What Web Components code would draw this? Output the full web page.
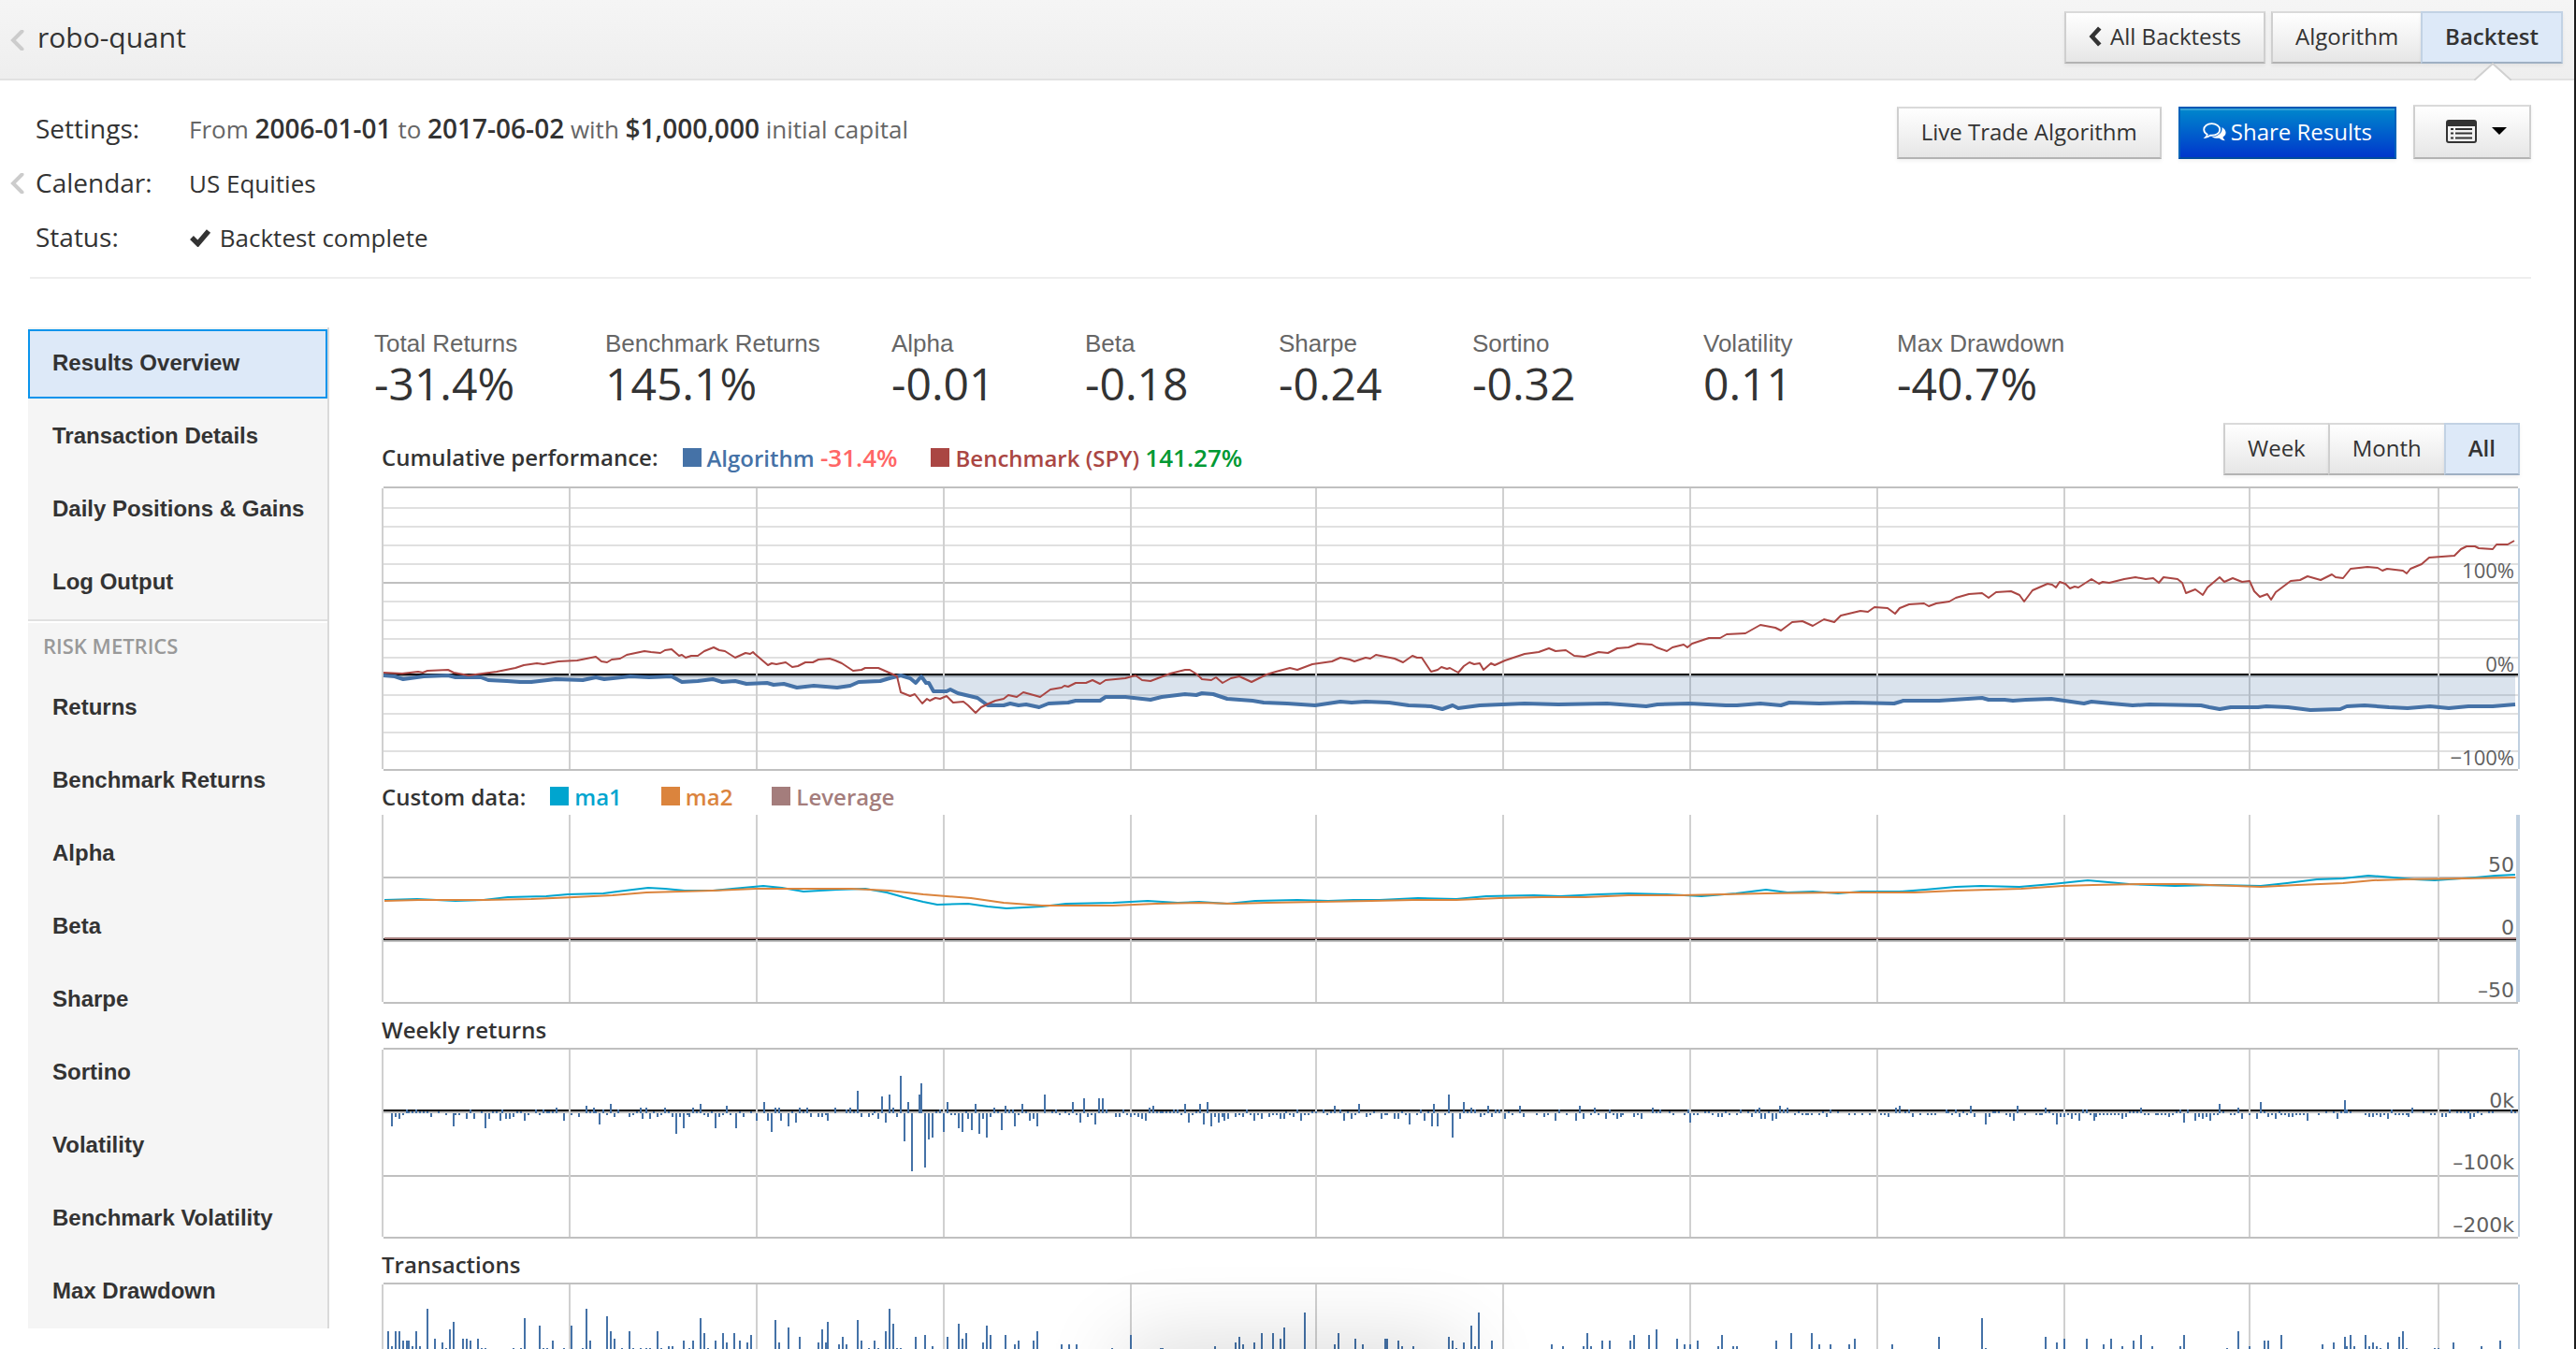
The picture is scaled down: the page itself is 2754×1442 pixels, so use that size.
<!doctype html>
<html lang="en">
<head>
    <meta charset="utf-8">
    <title>robo-quant</title>
    <style>
        body {
            margin: 0;
            height: 100vh;
            overflow: hidden;
            box-sizing: border-box;
            border-right: 2px solid #1c1c1c;
            background: #fff;
            color: #333;
            font-family: "Open Sans", sans-serif;
            font-size: 24px;
        }

        main {
            display: flex;
            align-items: flex-start;
            gap: 48px;
            padding: 52px 58px 0 30px;
        }

        .results {
            flex: 1;
            min-width: 0;
        }

        .metrics {
            display: grid;
            grid-template-columns: 247fr 306fr 207fr 207fr 207fr 247fr 207fr 666fr;
            padding-top: 4px;
        }

        .change {
            font-size: 26px;
        }

        .down {
            color: #f66;
        }

        .up {
            color: #093;
        }

        /* soft shade coming up from the bottom edge of the window */
        .shade {
            position: fixed;
            left: 44%;
            top: calc(100% + 6px);
            width: 340px;
            height: 60px;
            box-shadow: 0 0 90px 10px rgba(0, 0, 0, .16);
            pointer-events: none;
        }
    </style>
</head>
<body>
<page-header>
    robo-quant
    <q-button slot="actions"><q-icon name="chevron-left"></q-icon>All Backtests</q-button>
    <q-group slot="actions">
        <q-button>Algorithm</q-button>
        <q-button active notch>Backtest</q-button>
    </q-group>
</page-header>

<backtest-info>
    <info-row label="Settings:">From <b>2006-01-01</b> to <b>2017-06-02</b> with <b>$1,000,000</b> initial capital</info-row>
    <info-row label="Calendar:" handle strong>US Equities</info-row>
    <info-row label="Status:" strong><q-icon name="check"></q-icon> Backtest complete</info-row>
    <q-button slot="actions">Live Trade Algorithm</q-button>
    <q-button slot="actions" primary><q-icon name="comments"></q-icon>Share Results</q-button>
    <q-button slot="actions" menu label="Layout"><q-icon name="list"></q-icon><q-icon name="caret"></q-icon></q-button>
</backtest-info>

<main>
    <side-nav>
        <nav-item active>Results Overview</nav-item>
        <nav-item>Transaction Details</nav-item>
        <nav-item>Daily Positions &amp; Gains</nav-item>
        <nav-item>Log Output</nav-item>
        <nav-heading>RISK METRICS</nav-heading>
        <nav-item>Returns</nav-item>
        <nav-item>Benchmark Returns</nav-item>
        <nav-item>Alpha</nav-item>
        <nav-item>Beta</nav-item>
        <nav-item>Sharpe</nav-item>
        <nav-item>Sortino</nav-item>
        <nav-item>Volatility</nav-item>
        <nav-item>Benchmark Volatility</nav-item>
        <nav-item>Max Drawdown</nav-item>
    </side-nav>

    <div class="results">
        <div class="metrics">
            <metric-value label="Total Returns">-31.4%</metric-value>
            <metric-value label="Benchmark Returns">145.1%</metric-value>
            <metric-value label="Alpha">-0.01</metric-value>
            <metric-value label="Beta">-0.18</metric-value>
            <metric-value label="Sharpe">-0.24</metric-value>
            <metric-value label="Sortino">-0.32</metric-value>
            <metric-value label="Volatility">0.11</metric-value>
            <metric-value label="Max Drawdown">-40.7%</metric-value>
        </div>

        <perf-chart data="performance" heading="Cumulative performance:">
            <legend-item slot="legend" style="--series: #4572a7">Algorithm <span class="change down">-31.4%</span></legend-item>
            <legend-item slot="legend" style="--series: #aa4643">Benchmark (SPY) <span class="change up">141.27%</span></legend-item>
            <q-group slot="range">
                <q-button>Week</q-button>
                <q-button>Month</q-button>
                <q-button active>All</q-button>
            </q-group>
        </perf-chart>
        <perf-chart data="custom" heading="Custom data:">
            <legend-item slot="legend" style="--series: #00a5cf">ma1</legend-item>
            <legend-item slot="legend" style="--series: #db843d">ma2</legend-item>
            <legend-item slot="legend" style="--series: #a47d7c">Leverage</legend-item>
        </perf-chart>
        <perf-chart data="weekly" heading="Weekly returns"></perf-chart>
        <perf-chart data="transactions" heading="Transactions"></perf-chart>
    </div>
</main>
<div class="shade"></div>

<template id="page-header">
    <style>
        :host {
            display: flex;
            justify-content: space-between;
            align-items: flex-start;
            box-sizing: border-box;
            height: 86px;
            padding: 0 12px 0 11px;
            border-bottom: 2px solid #e2e2e2;
            background: linear-gradient(#f5f5f5, #eee);
        }

        h1 {
            display: flex;
            align-items: center;
            gap: 14px;
            margin: 0;
            font-size: 30px;
            font-weight: 400;
            line-height: 80px;
        }

        q-icon {
            color: #ccc;
            padding-top: 6px;
        }

        .actions {
            display: flex;
            gap: 6px;
            padding-top: 12px;
        }
    </style>
    <h1><q-icon name="handle"></q-icon><span><slot></slot></span></h1>
    <div class="actions"><slot name="actions"></slot></div>
</template>

<template id="backtest-info">
    <style>
        :host {
            display: flex;
            justify-content: space-between;
            align-items: flex-start;
            margin: 0 46px 0 32px;
            padding: 22px 0 14px;
            border-bottom: 2px solid #eee;
        }

        .rows {
            margin-left: -21px;
        }

        .actions {
            display: flex;
            align-items: flex-end;
            gap: 18px;
            padding-top: 4px;
        }
    </style>
    <div class="rows"><slot></slot></div>
    <div class="actions"><slot name="actions"></slot></div>
</template>

<template id="info-row">
    <style>
        :host {
            display: grid;
            grid-template-columns: 27px 164px auto;
            align-items: baseline;
            height: 58px;
            line-height: 58px;
            font-size: 26px;
            color: #666;
        }

        :host([strong]), .label {
            color: #333;
        }

        .label {
            font-size: 28px;
        }

        .handle {
            align-self: center;
            display: flex;
            color: #ccc;
        }

        :host(:not([handle])) .handle {
            visibility: hidden;
        }

        ::slotted(b) {
            color: #333;
            font-size: 28px;
            font-weight: 600;
        }
    </style>
    <span class="handle"><q-icon name="handle"></q-icon></span>
    <span class="label"></span>
    <span><slot></slot></span>
</template>

<template id="q-button">
    <style>
        :host {
            display: block;
            position: relative;
        }

        button {
            display: flex;
            align-items: center;
            justify-content: center;
            gap: 5px;
            box-sizing: border-box;
            width: 100%;
            height: 56px;
            margin: 0;
            padding: 0 24px 2px;
            border: 2px solid #ccc;
            border-color: #dadada #cfcfcf #b3b3b3;
            background: linear-gradient(#fff, #e6e6e6);
            box-shadow: 0 2px 4px rgba(0, 0, 0, .06);
            color: #333;
            font: inherit;
            font-size: 24px;
            line-height: 50px;
            white-space: nowrap;
            cursor: pointer;
        }

        :host([joined]) button {
            border-right: 0;
        }

        :host([active]) button {
            border-color: #c2d2e4 #c2d2e4 #9fb0c3;
            background: #dde9f8;
            font-weight: 600;
        }

        :host([primary]) button {
            border-color: #0058b4 #0062bb #004c9e;
            background: linear-gradient(#0088cc, #0037cc);
            box-shadow: inset 0 2px 0 rgba(255, 255, 255, .2), 0 2px 4px rgba(0, 0, 0, .06);
            color: #fff;
        }

        :host([menu]) button {
            justify-content: flex-end;
            gap: 16px;
            min-width: 126px;
            height: 58px;
        }

        .notch {
            display: none;
            position: absolute;
            top: 55px;
            left: calc(50% - 19px);
        }

        :host([notch]) .notch {
            display: block;
        }
    </style>
    <button type="button"><slot></slot></button>
    <svg class="notch" width="40" height="19"><path d="M0 19L20 1L40 19Z" fill="#fff"/><path d="M0 19L20 1L40 19" fill="none" stroke="#d0d0d0" stroke-width="2"/></svg>
</template>

<template id="q-group">
    <style>
        :host {
            display: flex;
        }
    </style>
    <slot></slot>
</template>

<template id="side-nav">
    <style>
        :host {
            display: block;
            box-sizing: border-box;
            flex: 0 0 322px;
            padding: 2px 0;
            border-right: 2px solid #dadada;
            background: #f5f5f5;
        }

        nav {
            display: flex;
            flex-direction: column;
            gap: 4px;
        }
    </style>
    <nav><slot></slot></nav>
</template>

<template id="nav-item">
    <style>
        :host {
            display: block;
        }

        a {
            display: block;
            padding: 0 0 2px 24px;
            border: 2px solid transparent;
            color: #333;
            font: bold 24px/68px "Liberation Sans", Arial, sans-serif;
            text-decoration: none;
            white-space: nowrap;
        }

        :host([active]) a {
            border-color: #0a94ec;
            background: #dde9f8;
        }
    </style>
    <a href="#"><slot></slot></a>
</template>

<template id="nav-heading">
    <style>
        :host {
            display: block;
            margin-top: -2px;
            padding-left: 16px;
            border-top: 2px solid #e0e0e0;
            box-shadow: inset 0 2px 0 #fff;
            color: #999;
            font-size: 22px;
            font-weight: 600;
            line-height: 52px;
        }
    </style>
    <slot></slot>
</template>

<template id="metric-value">
    <style>
        :host {
            display: block;
            white-space: nowrap;
        }

        .label {
            color: #666;
            font: 26px/26px "Liberation Sans", Arial, sans-serif;
        }

        .value {
            font-size: 48px;
            line-height: 60px;
        }
    </style>
    <div class="label"></div>
    <div class="value"><slot></slot></div>
</template>

<template id="legend-item">
    <style>
        :host {
            color: var(--series);
        }

        i {
            display: inline-block;
            width: 20px;
            height: 20px;
            margin-right: 6px;
            background: var(--series);
        }
    </style>
    <i></i><slot></slot>
</template>

<template id="perf-chart">
    <style>
        :host {
            display: block;
        }

        header {
            display: flex;
            justify-content: space-between;
            align-items: flex-end;
            padding: 12px 0 0 8px;
        }

        .legend {
            display: flex;
            height: 32px;
            padding-bottom: 3px;
            font-weight: 600;
            line-height: 32px;
        }

        h2 {
            margin: 0 26px 0 0;
            font: inherit;
        }

        slot[name="legend"]::slotted(*) {
            margin-right: 42px;
        }

        slot[name="range"]::slotted(*) {
            margin-bottom: 12px;
        }

        :host([data="performance"]) .legend {
            padding-bottom: 15px;
        }

        :host([data="performance"]) slot[name="legend"]::slotted(*) {
            margin-right: 36px;
        }

        .plot {
            position: relative;
            margin-left: 8px;
        }

        svg {
            display: block;
            width: 100%;
        }

        .axis {
            position: absolute;
            right: 6px;
            color: #606060;
            font-size: 22px;
            line-height: 22px;
        }

        :host(:not([data="performance"])) .axis {
            font-family: "DejaVu Sans", sans-serif;
        }
    </style>
    <header>
        <div class="legend"><h2></h2><slot name="legend"></slot></div>
        <slot name="range"></slot>
    </header>
    <div class="plot"></div>
</template>

<script>
    "use strict";

    const ICONS = {
        'handle': [15, 22, '<path d="M12.500 1.500L3 11L12.500 20.500" fill="none" stroke="currentColor" stroke-width="4" stroke-linecap="round"/>'],
        'chevron-left': [18, 22, '<path d="M10 0.500L13.500 3.500L6.500 11L13.500 18.500L10 21.500L0.500 11Z" fill="currentColor"/>'],
        'check': [26, 20, '<path d="M3 10L9.500 16.500L21 3" fill="none" stroke="currentColor" stroke-width="5.500"/>'],
        'comments': [25, 20, '<path d="M9.500 1.200C4.800 1.200 1.200 4 1.200 7.500C1.200 9.800 2.700 11.600 4.800 12.700C4.600 14 3.800 15 3 15.800C5 15.600 6.800 14.800 8 13.700C14 14.200 18.200 11.400 18.200 7.500C18.200 4 14.300 1.200 9.500 1.200Z" fill="none" stroke="currentColor" stroke-width="1.800"/><path d="M20.500 5C23 6.500 24.600 8.500 24.600 10.800C24.600 12.800 23.400 14.500 21.500 15.600C21.800 17 22.700 18 23.800 19.200C21.200 19 19.200 18 17.800 16.700C14.500 17.100 11.700 16.400 9.800 15.200C16 15 21.500 11.200 20.500 5Z" fill="currentColor"/>'],
        'list': [33, 25, '<path d="M3 0H30Q33 0 33 3V22Q33 25 30 25H3Q0 25 0 22V3Q0 0 3 0ZM2 7V22Q2 23 3 23H30Q31 23 31 22V7Z" fill="currentColor" fill-rule="evenodd"/><path d="M5 9h3v2h-3zM10 9h18v2h-18zM5 13.500h3v2h-3zM10 13.500h18v2h-18zM5 18.500h3v2h-3zM10 18.500h18v2h-18z" fill="currentColor"/>'],
        'caret': [16, 8, '<path d="M0 0H16L8 8Z" fill="#000"/>']
    };

    // x of every 1 January in the plot, plus the right edge
    const YEARS = [0, 200, 400, 600, 800, 998, 1198, 1398, 1598, 1798, 1996, 2198, 2400];

    // x of the first trading week of every year
    const FIRST_WEEKS = [2, 202, 400, 600, 800, 998, 1200, 1398, 1598, 1798, 1996, 2198];

    const CHARTS = {
        performance: {
            height: 304,
            major: [0, 102, 202, 302],
            minor: [22, 42, 62, 82, 122, 142, 162, 182, 222, 242, 262, 282],
            zero: 200,
            labels: [['100%', 102], ['0%', 202], ['−100%', 302]],
            lines: [
                {
                    color: '#4572a7', width: 4, fill: true,
                    points: '2,202 14,203 23,206 45,203 71,202 79,204 106,204 114,207 134,208 148,209 160,209 186,206 215,207 229,204 238,206 266,203 286,204 310,203 321,209 338,208 354,206 364,209 378,208 390,211 412,210 419,212 430,211 444,215 462,213 487,215 501,213 510,209 533,208 543,205 555,202 565,205 571,210 577,203 582,210 585,210 590,219 604,219 608,217 616,221 637,226 648,234 665,234 672,232 681,234 689,233 703,236 713,232 734,231 742,229 768,229 774,225 795,225 822,228 834,225 859,222 871,223 877,221 889,222 904,227 931,229 943,231 968,232 998,234 1025,230 1037,231 1052,230 1077,231 1098,234 1122,235 1134,238 1145,234 1151,237 1174,234 1222,232 1258,233 1310,232 1352,235 1364,233 1398,232 1437,234 1449,234 1474,232 1496,234 1505,231 1537,232 1572,231 1617,232 1627,229 1665,229 1711,226 1718,228 1735,228 1744,229 1758,228 1785,227 1820,232 1828,230 1849,232 1872,234 1890,233 1945,234 1954,236 1965,238 1977,236 2006,236 2015,235 2038,236 2062,239 2094,238 2101,235 2120,234 2146,236 2166,237 2190,235 2210,237 2231,235 2257,235 2281,233'
                },
                {
                    color: '#aa4643', width: 2,
                    points: '2,199 22,200 39,198 44,199 49,197 71,196 77,199 93,202 108,200 123,198 143,194 152,191 166,189 173,190 189,187 209,186 229,182 235,187 241,188 246,185 255,184 262,180 281,176 288,177 298,178 303,175 310,174 318,181 321,180 325,183 331,181 338,181 345,176 355,172 361,175 367,176 378,183 389,178 394,179 397,177 399,179 413,191 417,189 422,190 432,188 439,193 445,192 453,188 461,188 467,185 479,184 485,186 492,189 504,197 513,196 517,194 531,194 547,201 551,203 555,220 565,224 570,222 578,232 583,227 586,229 592,226 597,227 604,224 611,231 622,230 627,234 635,242 641,236 647,233 656,229 665,227 670,223 679,225 686,220 697,223 704,225 715,217 727,215 730,213 734,214 742,210 753,210 760,207 768,211 774,207 795,205 806,202 813,207 822,208 843,200 859,196 864,196 872,201 877,206 887,207 892,204 899,210 908,205 917,203 930,209 946,201 956,198 971,194 979,196 995,190 1016,187 1025,183 1030,184 1035,185 1040,187 1052,183 1057,184 1063,180 1068,181 1083,184 1092,188 1102,181 1107,183 1112,183 1122,198 1129,196 1133,193 1139,195 1142,194 1151,199 1157,192 1163,188 1168,190 1174,189 1178,196 1186,189 1190,191 1201,186 1222,179 1237,177 1248,173 1255,176 1266,175 1275,181 1286,182 1301,177 1311,178 1321,173 1333,172 1343,168 1358,169 1363,172 1374,176 1380,172 1392,169 1396,172 1401,168 1419,162 1431,162 1438,158 1458,157 1474,148 1490,151 1496,154 1508,145 1519,144 1530,149 1542,142 1553,145 1560,138 1581,133 1589,134 1596,129 1610,130 1618,136 1623,130 1633,126 1649,125 1654,128 1662,125 1676,123 1683,119 1697,115 1711,114 1718,119 1726,113 1742,112 1751,116 1756,123 1765,111 1781,104 1786,105 1790,108 1794,102 1800,104 1805,109 1810,107 1814,108 1828,99 1836,104 1840,102 1847,103 1863,99 1875,97 1886,99 1894,98 1900,103 1905,97 1920,99 1925,103 1929,114 1939,110 1947,116 1952,108 1965,97 1970,102 1979,98 1989,102 1997,101 2002,112 2008,118 2016,115 2020,121 2025,113 2041,101 2051,100 2059,96 2073,100 2085,94 2089,97 2097,98 2105,88 2123,86 2134,87 2139,90 2144,88 2161,90 2165,93 2169,88 2181,83 2189,76 2216,74 2223,67 2229,64 2238,64 2242,66 2257,67 2261,62 2273,62 2280,58'
                }
            ]
        },
        custom: {
            height: 202,
            major: [66, 134, 200],
            zero: 132,
            edge: 4,
            labels: [['50', 67], ['0', 134], ['–50', 201]],
            lines: [
                {
                    color: '#00a5cf', width: 2,
                    points: '3,91 38,90 79,92 109,91 135,88 176,87 199,85 237,84 252,82 285,78 303,79 324,81 354,81 375,79 408,76 428,78 451,82 487,80 517,79 540,83 558,88 579,93 594,96 627,95 648,98 668,100 706,98 732,95 782,94 819,92 851,94 874,93 904,95 934,92 979,91 1012,92 1039,91 1067,91 1108,89 1149,90 1181,87 1232,86 1260,87 1301,85 1333,84 1374,85 1411,87 1448,84 1480,80 1503,83 1530,82 1557,84 1582,82 1623,82 1650,80 1683,77 1710,76 1751,77 1786,74 1824,70 1846,72 1868,74 1917,76 1960,75 2009,76 2037,73 2069,69 2097,68 2124,65 2151,67 2173,69 2195,70 2238,67 2260,65 2281,64'
                },
                {
                    color: '#db843d', width: 2,
                    points: '3,92 40,91 109,91 160,90 206,88 247,86 283,83 319,82 354,81 400,79 431,79 502,79 543,81 579,85 630,89 665,94 706,97 747,97 782,97 828,95 874,94 911,95 947,94 1002,93 1058,92 1103,91 1149,91 1195,89 1241,88 1287,88 1333,86 1388,86 1480,84 1557,83 1639,83 1683,81 1753,79 1797,76 1830,75 1884,74 1928,74 2009,77 2048,75 2097,73 2129,70 2162,69 2227,68 2281,67'
                },
                {color: '#a47d7c', width: 2, points: '3,132 2282,132'}
            ]
        },
        weekly: {
            height: 204,
            major: [0, 68, 136, 202],
            zero: 66,
            base: 70,
            labels: [['0k', 70], ['–100k', 136], ['–200k', 203]],
            bars: [
                [0, 0, -7, -2, -3, -1, 2, 1, 1, 2, 1, 1, 1, -2, 0, 1, 0, -1, 0, -7, -1, -1, 0, -3, 2, -3, 0, 1, -8, -3, 1, 1, -4, 2, -3, -3, -2, 1, 1, -4, -1, 0, 2, -1, 2, 1, 1, 1, 3, 0, -4, 0],
                [-1, 0, -2, 0, 4, 1, 3, 1, -6, 2, -1, 5, -2, 2, 0, 0, -2, -1, 1, 3, -3, 3, -3, 1, -2, -1, 3, 1, -2, -11, -2, -8, -1, -2, 3, 1, 5, -1, -2, 1, -8, -2, -1, 4, -1, 0, -8, 1, -2, 0, 1, 0],
                [-4, 0, 6, -4, -10, 3, 3, -4, 0, -7, 1, -5, 3, 1, 3, -2, 0, -2, -2, -1, -4, 0, 3, 0, 0, 2, 3, 1, 12, -2, 0, -2, -1, 1, -3, 9, -5, 10, 3, -2, 20, -15, 6, -31, 0, 10, 16, -29, -14, -13, 1, 2],
                [-10, 6, -1, -1, -8, -10, 1, -3, -9, 5, -11, -3, -13, -2, 3, 1, -9, 4, 2, 2, -7, -1, 5, 1, -4, -3, -7, 0, 10, 0, 1, 2, -1, 0, 1, -1, 6, -1, -5, 8, -2, -1, -6, 8, 8, 2, 0, 0, -2, -2, 2, -1],
                [-2, -1, -2, -3, -4, 3, 4, 1, 1, 1, 1, 1, 2, 2, -1, 5, -5, -1, 1, 5, -6, 6, -7, -2, -5, -2, -4, -3, 0, -2, -1, -2, 2, -1, -4, -1, -3, 0, -2, -1, -1, -3, -3, 1, -1, -2, 2, -4, -1, -1, 1],
                [1, 0, 2, -1, 1, 4, 0, 2, -4, 1, -3, -1, 5, 0, -2, -1, 1, 0, -3, -1, -1, 0, -3, -3, 1, -1, -6, 0, -1, 2, -4, 1, -7, 5, -7, 0, -1, 10, -13, 0, -3, 6, 1, 3, 2, 0, -2, -1, 4, -2, 2, 2],
                [-3, 1, -1, 0, 4, -2, 0, 0, 0, -1, 0, -2, -1, 0, -4, 2, 0, -1, 0, 0, -4, 4, -3, 0, -1, 3, -1, 0, -3, 2, -1, -3, -2, -1, 0, 0, -2, -1, -3, 0, 0, 3, 1, 2, 0, 0, 1, -1, 0, 0, -1, 2],
                [-5, -1, -1, 0, 1, 1, -1, 0, -2, -2, 1, -1, 0, -1, 2, 0, 1, -2, 2, 3, -3, -3, 1, -4, -3, 4, 2, 3, 0, -1, 1, -1, -1, -1, -1, 0, -1, 1, -2, 2, 0, 1, 0, 0, -1, 0, -1, 0, -1, 0, -1, 0],
                [0, -1, -1, -2, 0, 3, 4, 0, 1, 2, -2, 0, -1, 0, -1, -1, -1, 0, 0, 2, 1, -1, 2, -2, 1, -1, 4, -2, 0, 0, -6, -2, 1, 1, 1, 0, -1, -2, -4, 4, 0, -1, 0, 0, -1, -1, -1, 3, 1, -1, -6, -2],
                [-2, -1, -3, -1, -4, 2, 2, -1, -4, -2, -1, -1, -1, -1, -1, -1, -3, -2, 1, 1, 1, 3, -1, -1, 0, -1, -1, -1, -1, -2, -1, 1, 2, -5, 2, 0, -4, -2, -3, -2, -4, -1, -1, 5, 1, 0, -1, -1, 3, -3, 0],
                [-1, 0, -3, 6, 1, -2, -1, -3, 1, -1, -1, -2, -2, -1, -1, -1, -4, 0, 0, -1, 0, 1, 0, 1, -3, 1, 7, 2, 1, 0, 0, 0, -1, -2, -2, -1, -2, -1, -3, 2, -1, -1, -1, -1, -2, 3, 0, 0, 1, 0, -1, -1],
                [0, -2, -2, 2, 0, 1, 1, 1, 1, -3, -2, 1, -1, 0, 1, 1, 0, 0, 0, 0, 2, 1]
            ]
        },
        transactions: {
            height: 204,
            major: [0, 202],
            base: 152,
            labels: [],
            // week: count
            bars: [
                {1: 50, 2: 42, 3: 50, 4: 50, 5: 45, 6: 45, 7: 45, 8: 42, 9: 50, 10: 42, 12: 62, 14: 46, 16: 44, 17: 41, 18: 51, 19: 55, 22: 46, 23: 46, 24: 45, 26: 46, 27: 41, 28: 41, 36: 41, 38: 41, 39: 57, 43: 53, 44: 41, 45: 41, 47: 45, 50: 41},
                {0: 53, 3: 41, 4: 62, 5: 45, 10: 58, 11: 50, 12: 46, 14: 41, 16: 50, 17: 41, 19: 41, 21: 41, 22: 41, 24: 50, 25: 41, 27: 42, 28: 42, 31: 45, 33: 41, 34: 45, 36: 57, 37: 49, 38: 41, 40: 45, 42: 49, 43: 44, 45: 49, 47: 45, 49: 44, 50: 48},
                {5: 56, 6: 44, 9: 52, 12: 47, 17: 44, 18: 51, 19: 44, 20: 55, 23: 43, 24: 47, 25: 43, 28: 56, 29: 45, 31: 41, 33: 45, 34: 41, 36: 50, 37: 62, 38: 54, 39: 41, 40: 41, 44: 47, 47: 48, 49: 42},
                {1: 47, 4: 54, 5: 46, 6: 49, 11: 44, 12: 53, 13: 48, 17: 48, 20: 43, 21: 45, 25: 45, 26: 50, 33: 43, 35: 43, 37: 43, 47: 41},
                {0: 48, 8: 41, 9: 41, 23: 42, 29: 44, 30: 47, 31: 43, 34: 44, 36: 49, 39: 49, 41: 46, 42: 52, 48: 60},
                {5: 43, 6: 49, 11: 46, 13: 43, 19: 46, 20: 46, 23: 45, 24: 42, 27: 42, 37: 47, 38: 45, 39: 41, 41: 44, 43: 53, 44: 42, 45: 60, 49: 45},
                {13: 43, 16: 42, 22: 42, 23: 49, 24: 42, 27: 45, 29: 45, 35: 45, 36: 48, 40: 48, 42: 51, 48: 46, 50: 43},
                {0: 43, 2: 45, 8: 42, 9: 48, 12: 42, 13: 42, 24: 45, 28: 49, 34: 49, 36: 43, 39: 43, 44: 43, 46: 46},
                {4: 43, 17: 47, 29: 57, 30: 41, 47: 47, 50: 44},
                {0: 46, 6: 46, 11: 43, 13: 46, 16: 42, 19: 45, 21: 48, 24: 42, 32: 42, 33: 48, 45: 41, 48: 50},
                {0: 42, 4: 45, 5: 45, 9: 48, 20: 43, 23: 44, 26: 47, 27: 42, 28: 48, 29: 42, 32: 48, 33: 42, 34: 44, 35: 42, 36: 41, 38: 44, 41: 47, 42: 50, 43: 41, 51: 41},
                {0: 41, 4: 44, 12: 42, 17: 45}
            ]
        }
    };

    // Base class: clones the template that has the same id as the tag.
    class QElement extends HTMLElement {
        constructor() {
            super();
            const shadow = this.attachShadow({mode: 'open'});
            shadow.appendChild(document.getElementById(this.localName).content.cloneNode(true));
        }
    }

    class QIcon extends HTMLElement {
        constructor() {
            super();
            const [width, height, body] = ICONS[this.getAttribute('name')];
            this.attachShadow({mode: 'open'}).innerHTML =
                '<style>:host { display: inline-flex; }</style>' +
                '<svg aria-hidden="true" width="' + width + '" height="' + height + '" viewBox="0 0 ' + width + ' ' + height + '">' + body + '</svg>';
        }
    }

    class QButton extends QElement {
        constructor() {
            super();
            if(this.hasAttribute('label')) {
                this.shadowRoot.querySelector('button').setAttribute('aria-label', this.getAttribute('label'));
            }
        }
    }

    class QGroup extends QElement {
        connectedCallback() {
            [...this.children].slice(0, -1).forEach(button => button.setAttribute('joined', ''));
        }
    }

    class Labelled extends QElement {
        connectedCallback() {
            this.shadowRoot.querySelector('.label').textContent = this.getAttribute('label');
        }
    }

    class PerfChart extends QElement {
        connectedCallback() {
            this.shadowRoot.querySelector('h2').textContent = this.getAttribute('heading');
            this.draw(CHARTS[this.getAttribute('data')]);
        }

        draw(chart) {
            const width = 2286;
            const rect = (x, y, w, h, fill) => `<rect x="${x}" y="${y}" width="${w}" height="${h}" fill="${fill}"/>`;
            const edge = chart.edge || 2;
            // a chart without a line on top starts its year lines at the very top
            const top = chart.major[0] ? 0 : 2;
            const length = chart.height - 2 - top;
            let grid = '';
            let series = '';

            (chart.minor || []).forEach(y => grid += rect(2, y, width - 4, 2, '#e0e0e0'));
            chart.major.forEach(y => grid += rect(2, y, width - 4, 2, '#c0c0c0'));
            if(chart.zero) grid += rect(2, chart.zero, width - 4, 2, '#000');
            YEARS.slice(0, -1).forEach(x => grid += rect(x, top, 2, length, '#d0d0d0'));
            grid += rect(width - edge, top, edge, length, '#c0d0e0');

            (chart.bars || []).forEach((year, i) => {
                const weeks = i === 4 || i === 9 ? 51 : 52;
                Object.entries(year).forEach(([week, value]) => {
                    const x = FIRST_WEEKS[i] + 2 * Math.round(week * (YEARS[i + 1] - YEARS[i]) / weeks / 2);
                    const h = Math.abs(value) * 2;
                    if(h) series += rect(x, value > 0 ? chart.base - h : chart.base, 2, h, '#4572a7');
                });
            });

            (chart.lines || []).forEach(line => {
                if(line.fill) {
                    series += `<polygon points="2,${chart.zero + 2} ${line.points} 2281,${chart.zero + 2}" fill="${line.color}" fill-opacity=".2"/>`;
                }
                series += `<polyline points="${line.points}" fill="none" stroke="${line.color}" stroke-width="${line.width}" stroke-linejoin="round" shape-rendering="auto"/>`;
            });

            this.shadowRoot.querySelector('.plot').innerHTML =
                `<svg height="${chart.height}" viewBox="0 0 ${width} ${chart.height}" preserveAspectRatio="none" shape-rendering="crispEdges">${grid}${series}</svg>` +
                chart.labels.map(([text, y]) => `<span class="axis" style="top: ${y - 24}px">${text}</span>`).join('');
        }
    }

    window.customElements.define('q-icon', QIcon);
    window.customElements.define('q-button', QButton);
    window.customElements.define('q-group', QGroup);
    window.customElements.define('info-row', class extends Labelled {});
    window.customElements.define('metric-value', class extends Labelled {});
    window.customElements.define('perf-chart', PerfChart);
    ['page-header', 'backtest-info', 'side-nav', 'nav-item', 'nav-heading', 'legend-item'].forEach(name => {
        window.customElements.define(name, class extends QElement {});
    });
</script>
</body>
</html>
